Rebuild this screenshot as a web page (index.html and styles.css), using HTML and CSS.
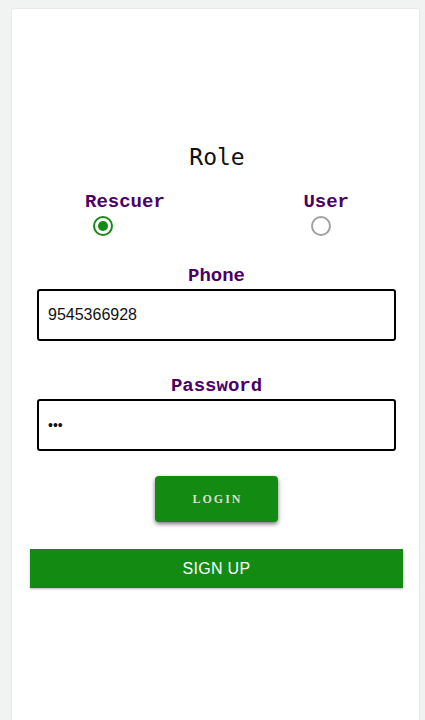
FILE: index.html
```html
<!DOCTYPE html>
<html>
<head>
<meta charset="utf-8">
<link rel="stylesheet" href="styles.css">
</head>
<body>
<div class="page">
  <div class="card">
    <h2 class="role-title">Role</h2>
    <div class="roles">
      <div class="role-opt rescuer">
        <span class="role-label">Rescuer</span>
        <span class="radio checked"></span>
      </div>
      <div class="role-opt user">
        <span class="role-label">User</span>
        <span class="radio"></span>
      </div>
    </div>
    <div class="field phone-field">
      <label class="field-label">Phone</label>
      <div class="input">9545366928</div>
    </div>
    <div class="field pass-field">
      <label class="field-label">Password</label>
      <div class="input pass">&bull;&bull;&bull;</div>
    </div>
    <div class="login-wrap"><button class="login">LOGIN</button></div>
    <button class="signup">SIGN UP</button>
  </div>
</div>
</body>
</html>
```

FILE: styles.css
```css
html, body { margin: 0; padding: 0; background: #f1f3f2; }
body { width: 425px; height: 720px; overflow: hidden; }
.page { padding: 9px 6px 0 12px; }
.card {
  background: #fff;
  min-height: 760px;
  border-radius: 2px;
  box-shadow: 0 0 2px rgba(0,0,0,0.12);
  box-sizing: border-box;
  padding: 135px 16px 0 18px;
  display: flex;
  flex-direction: column;
}
.role-title {
  margin: 0;
  text-align: center;
  font-family: "DejaVu Sans Mono", monospace;
  font-weight: normal;
  font-size: 23px;
  line-height: 26px;
  color: #111;
  padding-left: 1px;
}
.roles {
  display: flex;
  justify-content: space-between;
  margin-top: 22px;
  padding: 0 54px 0 55px;
}
.role-opt { display: flex; flex-direction: column; align-items: flex-start; }
.role-label {
  font-family: "Liberation Mono", "Courier New", monospace;
  font-weight: bold;
  font-size: 19px;
  line-height: 20px;
  color: #4b0066;
}
.radio {
  margin: 4px 0 0 8px;
  width: 20px;
  height: 20px;
  box-sizing: border-box;
  border-radius: 50%;
  border: 2px solid #a0a0a0;
  position: relative;
}
.radio.checked { border-color: #168a14; }
.radio.checked::after {
  content: "";
  position: absolute;
  left: 3px; top: 3px;
  width: 10px; height: 10px;
  border-radius: 50%;
  background: #168a14;
}
.field { display: flex; flex-direction: column; align-items: center; }
.phone-field { margin-top: 30px; }
.pass-field { margin-top: 35px; }
.field-label {
  font-family: "Liberation Mono", "Courier New", monospace;
  font-weight: bold;
  font-size: 19px;
  line-height: 20px;
  color: #4b0066;
}
.input {
  margin-top: 3px;
  align-self: stretch;
  margin-left: 7px;
  margin-right: 7px;
  height: 52px;
  box-sizing: border-box;
  border: 2px solid #000;
  border-radius: 3px;
  padding: 0 9px;
  display: flex;
  align-items: center;
  font-family: "Liberation Sans", Arial, sans-serif;
  font-size: 16px;
  color: #111;
}
.input.pass { font-size: 14px; letter-spacing: 0; }
.login-wrap { display: flex; justify-content: center; margin-top: 25px; }
.login {
  width: 123px;
  height: 46px;
  border: none;
  border-radius: 4px;
  background: #138a12;
  color: #dcdccb;
  font-family: "Liberation Serif", "Times New Roman", serif;
  font-weight: bold;
  font-size: 12px;
  letter-spacing: 2px;
  box-shadow: 0 2px 4px rgba(0,0,0,0.55);
  padding: 0 0 0 2px;
}
.signup {
  margin-top: 27px;
  height: 39px;
  border: none;
  border-radius: 0;
  background: #138a12;
  color: #fff;
  font-family: "Liberation Sans", Arial, sans-serif;
  font-size: 16px;
  letter-spacing: 0.3px;
  box-shadow: 0 1px 2px rgba(0,0,0,0.3);
  padding: 0;
}
```
